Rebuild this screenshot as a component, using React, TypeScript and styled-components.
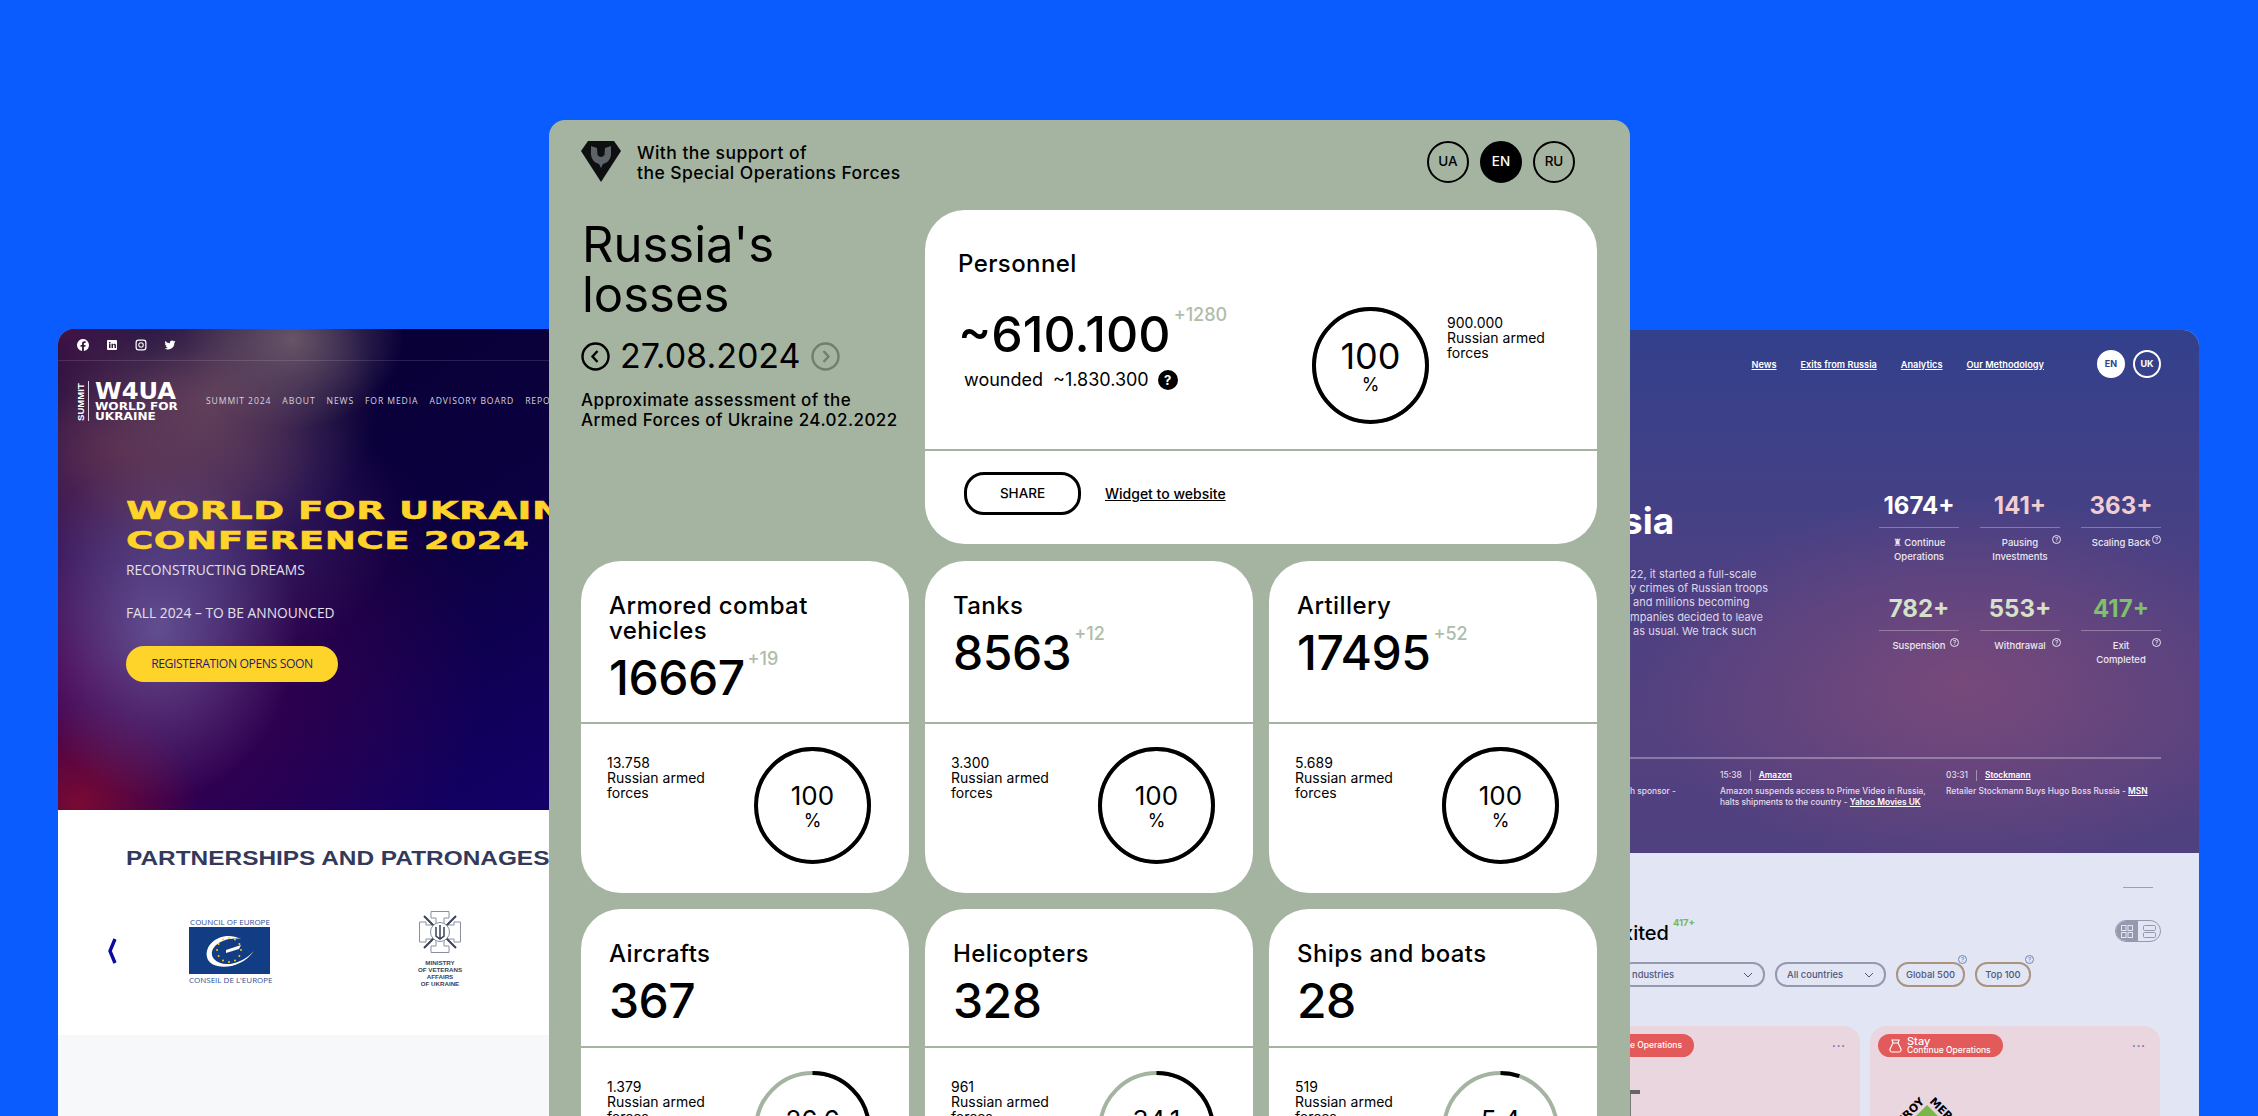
import type { ReactNode } from 'react'
import styled, { createGlobalStyle } from 'styled-components'

const GlobalStyle = createGlobalStyle`
  html, body { margin: 0; padding: 0; }
  body { background: #0a5cff; font-family: Inter, "Liberation Sans", sans-serif; }
  * { box-sizing: border-box; }
`

const GREEN = '#a5b4a0'

/* ---------- the desktop ---------- */

const Desktop = styled.div`
  position: relative;
  width: 2258px;
  height: 1116px;
  overflow: hidden;
  background: #0a5cff;
`

const LeftWindow = styled.section`
  position: absolute;
  left: 58px;
  top: 329px;
  width: 500px;
  height: 787px;
  border-radius: 16px 0 0 0;
  overflow: hidden;
  background: #f7f8fa;
  font-family: Inter, sans-serif;
`

const RightWindow = styled.section`
  position: absolute;
  left: 1630px;
  top: 330px;
  width: 569px;
  height: 786px;
  border-radius: 0 16px 0 0;
  overflow: hidden;
  background: #e2e6f4;
  font-family: Inter, sans-serif;
`

const Panel = styled.main`
  position: absolute;
  left: 549px;
  top: 120px;
  width: 1081px;
  height: 996px;
  border-radius: 16px 16px 0 0;
  background: ${GREEN};
  padding: 20px 32px 0;
  color: #000;
  overflow: hidden;
`

/* ---------- left window ---------- */

const Hero = styled.div`
  height: 481px;
  background:
    radial-gradient(110px 90px at 235px 10px, rgba(125, 105, 115, 0.75), transparent 100%),
    radial-gradient(170px 150px at 150px 70px, rgba(110, 75, 95, 0.8), transparent 100%),
    radial-gradient(200px 110px at 60px 120px, rgba(125, 60, 70, 0.5), transparent 100%),
    radial-gradient(140px 170px at 100px 300px, rgba(100, 85, 150, 0.9), transparent 100%),
    radial-gradient(120px 100px at 20px 475px, rgba(125, 10, 50, 0.95), transparent 100%),
    radial-gradient(220px 170px at 120px 190px, rgba(70, 60, 125, 0.7), transparent 100%),
    radial-gradient(100px 70px at 0px 0px, rgba(75, 20, 70, 0.9), transparent 100%),
    radial-gradient(400px 320px at 30px 340px, rgba(85, 0, 85, 0.9), transparent 100%),
    linear-gradient(150deg, #0a0038 30%, #0b0040 55%, #14006a 100%);
`

const SocialBar = styled.div`
  height: 32px;
  display: flex;
  align-items: center;
  gap: 17px;
  padding-left: 19px;
  border-bottom: 1px solid rgba(255, 255, 255, 0.12);
`

const SocialIcon = styled.svg`
  width: 12px;
  height: 12px;
  fill: #fff;
`

const NavRow = styled.div`
  display: flex;
  align-items: center;
  padding: 20px 0 0 19px;
  white-space: nowrap;
`

const Brand = styled.div`
  flex: none;
  display: flex;
  align-items: stretch;
  height: 40px;
  color: #fff;
  width: 129px;
`

const BrandSide = styled.span`
  writing-mode: vertical-rl;
  transform: rotate(180deg);
  font: 700 9.6px/8px "Liberation Sans", sans-serif;
  text-align: left;
  border-left: 1px solid rgba(255, 255, 255, 0.8);
  padding-left: 3px;
  margin-right: 6px;
`

const BrandText = styled.div`
  display: flex;
  flex-direction: column;
`

const BrandBig = styled.span`
  font: 900 23px/21px "DejaVu Sans", sans-serif;
  display: block;
  transform: scaleX(1.05);
  transform-origin: left;
`

const BrandSmall = styled.span`
  font: 700 11px/10px "DejaVu Sans", sans-serif;
  display: block;
  transform: scaleX(1.1);
  transform-origin: left;
`

const NavLinks = styled.nav`
  display: flex;
  gap: 11px;
  color: #d6d3df;
  font: 500 8.6px "Open Sans", sans-serif;
  letter-spacing: 0.9px;
`

const HeroBody = styled.div`
  padding: 75px 0 0 68px;
`

const HeroTitle = styled.h1`
  margin: 0;
  color: #ffd42a;
  font: 700 24px/30px "DejaVu Sans", sans-serif;
  letter-spacing: 0.35px;
  -webkit-text-stroke: 0.5px #ffd42a;
  white-space: nowrap;
  transform: scaleX(1.55);
  transform-origin: left;
`

const HeroNote = styled.p<{ $gap?: number }>`
  margin: ${p => p.$gap ?? 0}px 0 0;
  color: #e4e0ea;
  font: 400 13.8px/18px "Open Sans", sans-serif;
`

const HeroButton = styled.div`
  margin-top: 24px;
  width: 212px;
  height: 36px;
  border-radius: 18px;
  background: #ffd42a;
  color: #1c1a7a;
  font: 500 12.2px/36px "Open Sans", sans-serif;
  letter-spacing: -0.4px;
  text-align: center;
`

const Partners = styled.div`
  height: 225px;
  background: #fff;
  padding: 36px 0 0 68px;
`

const PartnersTitle = styled.h2`
  margin: 0;
  color: #33395a;
  font: 700 20px/24px "Liberation Sans", sans-serif;
  white-space: nowrap;
  transform: scaleX(1.22);
  transform-origin: left;
`

const PartnersRow = styled.div`
  display: flex;
  align-items: flex-start;
  margin: 47px 0 0 -19px;
`

const Chevron = styled.svg`
  width: 10px;
  height: 26px;
  margin-top: 21px;
  fill: none;
  stroke: #0a0aa0;
  stroke-width: 3.4;
`

const CoeLogo = styled.div`
  margin-left: 72px;
  width: 82px;
  color: #2b4f97;
  font: 400 8px/9px "Open Sans", sans-serif;
  text-align: center;
  white-space: nowrap;
`

const CoeFlag = styled.svg`
  display: block;
  width: 81px;
  height: 47px;
  margin: 1px 0;
`

const VeteransLogo = styled.div`
  margin: -6px 0 0 147px;
  width: 44px;
  display: flex;
  flex-direction: column;
  align-items: center;
  color: #3a4256;
  font: 700 6.2px/7px "Liberation Sans", sans-serif;
  text-align: center;
  white-space: nowrap;
`

const VeteransMark = styled.svg`
  width: 42px;
  height: 42px;
  margin-bottom: 6px;
`

/* ---------- centre panel ---------- */

const PanelHead = styled.header`
  display: flex;
  align-items: center;
  height: 43px;
`

const ForcesLogo = styled.svg`
  width: 40px;
  height: 41px;
  margin-right: 16px;
`

const ForcesText = styled.div`
  flex: 1;
  padding-top: 2px;
  font: 500 17.5px/20px Inter, sans-serif;
  letter-spacing: 0.45px;
`

const Langs = styled.div`
  display: flex;
  gap: 11px;
  margin-right: 23px;
`

const LangButton = styled.div<{ $active?: boolean }>`
  width: 42px;
  height: 42px;
  border-radius: 50%;
  border: 2.5px solid #000;
  background: ${p => (p.$active ? '#000' : 'transparent')};
  color: ${p => (p.$active ? '#fff' : '#000')};
  font: 500 13.5px/37px Inter, sans-serif;
  text-align: center;
`

const TopGrid = styled.div`
  display: grid;
  grid-template-columns: 344px 672px;
  margin-top: 27px;
`

const Intro = styled.div`
  padding-top: 10px;
`

const MainTitle = styled.h1`
  margin: 0 0 0 1px;
  font: 400 49px/50px Inter, sans-serif;
`

const DateRow = styled.div`
  display: flex;
  align-items: center;
  gap: 10px;
  margin-top: 18px;
  height: 36px;
  font: 400 34px/36px Inter, sans-serif;
`

const RoundArrow = styled.svg<{ $muted?: boolean }>`
  width: 29px;
  height: 29px;
  fill: none;
  stroke: #000;
  stroke-width: 2.4;
  opacity: ${p => (p.$muted ? 0.3 : 1)};
`

const IntroText = styled.p`
  margin: 16px 0 0;
  font: 500 17px/20px Inter, sans-serif;
  letter-spacing: 0.45px;
`

const Card = styled.article`
  background: #fff;
  border-radius: 40px;
  display: flex;
  flex-direction: column;
  overflow: hidden;
`

const CardTop = styled.div<{ $height: number; $wide?: boolean }>`
  height: ${p => p.$height}px;
  padding: ${p => (p.$wide ? '41px 33px 0' : '32px 28px 0')};
  border-bottom: 2px solid ${GREEN};
`

const CardTitle = styled.h2`
  margin: 0;
  font: 500 24px/25px Inter, sans-serif;
  letter-spacing: 0.4px;
`

const Count = styled.div`
  display: flex;
  align-items: flex-start;
  margin-top: 9px;
  font: 500 48px/52px Inter, sans-serif;
  letter-spacing: -0.5px;
`

const BigCount = styled(Count)`
  margin-top: 1px;
  font-size: 50px;
  letter-spacing: 0;
`

const Delta = styled.span`
  margin: -4px 0 0 3px;
  color: #aebdaa;
  font: 500 18px/22px Inter, sans-serif;
  letter-spacing: 0;
`

const CardBottom = styled.div`
  flex: 1;
  display: flex;
  justify-content: space-between;
  padding: 23px 38px 0 26px;
`

const Forces = styled.div`
  padding-top: 8px;
  font: 400 14px/15px Inter, sans-serif;
`

const Ring = styled.div`
  position: relative;
  width: 117px;
  height: 117px;
  flex: none;
  display: flex;
  flex-direction: column;
  align-items: center;
  justify-content: center;
`

const RingSvg = styled.svg`
  position: absolute;
  inset: 0;
  width: 100%;
  height: 100%;
  transform: rotate(-90deg);
`

const RingValue = styled.span`
  font: 400 26px/30px Inter, sans-serif;
`

const RingUnit = styled.span`
  font: 400 18px/20px Inter, sans-serif;
`

const HeroRingValue = styled(RingValue)`
  font-size: 36px;
  line-height: 38px;
`

const PersonnelBody = styled.div`
  display: flex;
  margin-top: 31px;
`

const PersonnelLeft = styled.div`
  width: 354px;
`

const Wounded = styled.div`
  display: flex;
  align-items: center;
  gap: 6px;
  margin: 9px 0 0 6px;
  font: 400 18px/22px Inter, sans-serif;
`

const WoundedValue = styled.span`
  margin-left: 4px;
`

const QuestionDot = styled.span`
  width: 20px;
  height: 20px;
  margin-left: 3px;
  border-radius: 50%;
  background: #000;
  color: #fff;
  font: 700 13px/20px Inter, sans-serif;
  text-align: center;
`

const PersonnelForces = styled(Forces)`
  padding: 8px 0 0 18px;
`

const ShareRow = styled.div`
  flex: 1;
  display: flex;
  align-items: center;
  gap: 24px;
  padding: 0 0 8px 39px;
`

const ShareButton = styled.div`
  width: 117px;
  height: 43px;
  border: 3px solid #000;
  border-radius: 20px;
  font: 500 13.5px/37px Inter, sans-serif;
  text-align: center;
`

const WidgetLink = styled.a`
  color: #000;
  text-decoration: underline;
  font: 500 14px Inter, sans-serif;
`

const CardGrid = styled.div`
  display: grid;
  grid-template-columns: repeat(3, 328px);
  gap: 16px;
  margin-top: 17px;
`

const Tall = styled(Card)`
  height: 332px;
`

const Personnel = styled(Card)`
  height: 334px;
`

/* ---------- right window ---------- */

const Losses = styled.div`
  height: 523px;
  color: #fff;
  background:
    radial-gradient(320px 190px at 334px 356px, rgba(124, 74, 122, 0.9), transparent 100%),
    linear-gradient(180deg, #33408c 0%, #4b4084 45%, #54417f 75%, #4f4080 100%);
  padding-top: 20px;
`

const TopNav = styled.div`
  display: flex;
  align-items: center;
  justify-content: flex-end;
  padding-right: 38px;
  height: 28px;
`

const TopLinks = styled.nav`
  display: flex;
  gap: 24px;
  margin-right: 53px;
  font: 600 9.2px Inter, sans-serif;
`

const TopLink = styled.a`
  color: #fff;
  text-decoration: underline;
`

const SmallLang = styled.div<{ $active?: boolean }>`
  width: 28px;
  height: 28px;
  margin-left: ${p => (p.$active ? 0 : 8)}px;
  border-radius: 50%;
  border: 2px solid #fff;
  background: ${p => (p.$active ? '#fff' : 'transparent')};
  color: ${p => (p.$active ? '#35408a' : '#fff')};
  font: 700 9px/24px Inter, sans-serif;
  text-align: center;
`

const LossesBody = styled.div`
  display: flex;
  justify-content: space-between;
  padding-right: 38px;
  height: 379px;
`

const Lead = styled.div`
  padding-top: 121px;
`

const LeadTitle = styled.h1`
  margin: 0 0 0 -8px;
  font: 700 37px/44px Inter, sans-serif;
`

const LeadText = styled.p`
  margin: 24px 0 0;
  color: #dcd8ea;
  font: 400 11px/14.2px Inter, sans-serif;
  white-space: pre;
`

const StatGrid = styled.div`
  display: grid;
  grid-template-columns: repeat(3, 80px);
  column-gap: 21px;
  grid-auto-rows: 103px;
  padding-top: 116px;
`

const Stat = styled.div`
  position: relative;
  text-align: center;
`

const StatValue = styled.div<{ $color: string }>`
  color: ${p => p.$color};
  height: 34px;
  border-bottom: 1px solid rgba(255, 255, 255, 0.3);
  font: 700 24px/24px Inter, sans-serif;
`

const StatLabel = styled.div`
  margin-top: 8px;
  color: #ebe8f0;
  font: 500 9.5px/13.7px Inter, sans-serif;
`

const HelpMark = styled.span<{ $color?: string; $top: number; $right: number }>`
  position: absolute;
  top: ${p => p.$top}px;
  right: ${p => p.$right}px;
  width: 9px;
  height: 9px;
  border-radius: 50%;
  border: 1px solid ${p => p.$color ?? '#ebe8f0'};
  color: ${p => p.$color ?? '#ebe8f0'};
  font: 500 6px/7px Inter, sans-serif;
  text-align: center;
`

const Ticker = styled.div`
  display: grid;
  grid-template-columns: 90px 226px 215px;
  margin-right: 38px;
  padding-top: 9px;
  border-top: 2px solid rgba(255, 255, 255, 0.3);
  color: #e2deec;
  font: 500 8.4px/11px Inter, sans-serif;
`

const TickerHead = styled.div`
  display: flex;
  align-items: center;
  height: 14px;
  margin-bottom: 4px;
`

const TickerDivider = styled.i`
  width: 1px;
  height: 11px;
  margin: 0 8px;
  background: rgba(255, 255, 255, 0.4);
`

const TickerLink = styled.a`
  color: #fff;
  font-weight: 600;
  text-decoration: underline;
`

const TickerBody = styled.div`
  white-space: nowrap;
`

const Companies = styled.div`
  padding: 34px 38px 0 0;
  color: #3b4169;
`

const Pager = styled.div`
  width: 30px;
  height: 1px;
  margin-left: auto;
  margin-right: 8px;
  background: #9aa0b5;
`

const ExitedRow = styled.div`
  display: flex;
  justify-content: space-between;
  align-items: flex-start;
  margin-top: 32px;
  height: 42px;
`

const Exited = styled.h2`
  margin: 0 0 0 -8px;
  display: flex;
  color: #000;
  font: 500 20px/26px Inter, sans-serif;
`

const ExitedCount = styled.span`
  margin: -4px 0 0 4px;
  color: #77b85e;
  font: 700 9.5px/14px Inter, sans-serif;
`

const ViewToggle = styled.div`
  width: 46px;
  height: 22px;
  border: 1.5px solid #9698ae;
  border-radius: 11px;
  overflow: hidden;
  display: flex;
`

const ViewHalf = styled.div<{ $active?: boolean }>`
  flex: 1;
  display: flex;
  align-items: center;
  justify-content: center;
  background: ${p => (p.$active ? '#9698ae' : 'transparent')};
`

const Filters = styled.div`
  display: flex;
  gap: 10px;
`

const Filter = styled.div<{ $width: number; $accent?: boolean; $flush?: boolean }>`
  position: relative;
  width: ${p => p.$width}px;
  height: 25px;
  padding: 0 ${p => (p.$accent ? 0 : 10)}px 0 ${p => (p.$flush ? 0 : p.$accent ? 0 : 10)}px;
  margin-left: ${p => (p.$flush ? '-10px' : 0)};
  display: flex;
  align-items: center;
  justify-content: ${p => (p.$accent ? 'center' : 'space-between')};
  border: 2px solid ${p => (p.$accent ? '#aa937f' : '#9698ae')};
  border-radius: 12px;
  color: #50557a;
  font: 500 9.4px Inter, sans-serif;
`

const FlushLabel = styled.span`
  padding-left: 10px;
`

const SelectCaret = styled.svg`
  width: 10px;
  height: 6px;
  fill: none;
  stroke: #50557a;
  stroke-width: 1;
`

const CompanyGrid = styled.div`
  display: grid;
  grid-template-columns: 230px 290px;
  gap: 10px;
  margin-top: 39px;
`

const CompanyCard = styled.div`
  position: relative;
  height: 120px;
  background: #ead6df;
  border-radius: 0 16px 0 0;
  overflow: hidden;
`

const RoundCompanyCard = styled(CompanyCard)`
  border-radius: 16px 16px 0 0;
`

const Badge = styled.div`
  display: inline-flex;
  align-items: center;
  gap: 5px;
  margin: 8px 0 0 8px;
  height: 23px;
  padding: 0 12px 0 11px;
  border-radius: 12px;
  background: #e25a5a;
  color: #fff;
`

const ClippedBadge = styled(Badge)`
  margin-left: 0;
  padding-left: 0;
  border-radius: 0 12px 12px 0;
  width: 64px;
  justify-content: flex-end;
`

const BadgeLines = styled.div`
  display: flex;
  flex-direction: column;
  font: 500 11px/10px Inter, sans-serif;
`

const BadgeSub = styled.span`
  font: 500 8.5px/9px Inter, sans-serif;
  white-space: nowrap;
`

const MoreDots = styled.span`
  position: absolute;
  top: 12px;
  right: 14px;
  color: #6b6a9a;
  font: 700 11px/11px Inter, sans-serif;
  letter-spacing: 1px;
`

const LeroyLogo = styled.svg`
  position: absolute;
  left: 0;
  top: 60px;
  width: 120px;
  height: 60px;
`

const TickLogo = styled.div`
  position: absolute;
  left: 0;
  top: 64px;
  width: 10px;
  height: 4px;
  background: #666;

  &::after {
    content: '';
    position: absolute;
    left: 0;
    top: 4px;
    width: 1px;
    height: 30px;
    background: #777;
  }
`

const RingGauge = ({ value, children }: { value: number; children: ReactNode }) => {
  const r = 56.5
  const c = 2 * Math.PI * r
  return (
    <Ring>
      <RingSvg viewBox="0 0 117 117">
        <circle cx="58.5" cy="58.5" r={r} fill="none" stroke={GREEN} strokeWidth="4" />
        <circle cx="58.5" cy="58.5" r={r} fill="none" stroke="#000" strokeWidth="4"
          strokeDasharray={`${(c * value) / 100} ${c}`} />
      </RingSvg>
      {children}
    </Ring>
  )
}

const stats1 = [
  { name: 'Armored combat vehicles', count: '16667', delta: '+19', total: '13.758', pct: 100, label: '100' },
  { name: 'Tanks', count: '8563', delta: '+12', total: '3.300', pct: 100, label: '100' },
  { name: 'Artillery', count: '17495', delta: '+52', total: '5.689', pct: 100, label: '100' },
]

const stats2 = [
  { name: 'Aircrafts', count: '367', total: '1.379', pct: 26.6, label: '26.6' },
  { name: 'Helicopters', count: '328', total: '961', pct: 34.1, label: '34.1' },
  { name: 'Ships and boats', count: '28', total: '519', pct: 5.4, label: '5.4' },
]

const HelpIcon = ({ top, right, color }: { top: number; right: number; color?: string }) => (
  <HelpMark $top={top} $right={right} $color={color}>?</HelpMark>
)

const App = () => {
  return (
    <Desktop>
      <GlobalStyle />

      <LeftWindow>
        <Hero>
          <SocialBar>
            <SocialIcon viewBox="0 0 24 24"><path d="M24 12a12 12 0 1 0-13.900 11.900v-8.400H7.100V12h3V9.400c0-3 1.800-4.700 4.500-4.700 1.300 0 2.700.2 2.700.2v3h-1.500c-1.500 0-2 .9-2 1.900V12h3.400l-.5 3.500h-2.900v8.400A12 12 0 0 0 24 12z" /></SocialIcon>
            <SocialIcon viewBox="0 0 24 24"><path fillRule="evenodd" d="M4 2h16a2 2 0 0 1 2 2v16a2 2 0 0 1-2 2H4a2 2 0 0 1-2-2V4a2 2 0 0 1 2-2zm2 7.500V18h3V9.500H6zM7.500 5.500a1.700 1.700 0 1 0 0 3.400 1.700 1.700 0 0 0 0-3.400zM11 9.500V18h3v-4.500c0-2.500 3-2.600 3 0V18h3v-5.300c0-4-4.300-3.900-6-1.900V9.500h-3z" /></SocialIcon>
            <SocialIcon viewBox="0 0 24 24"><path fillRule="evenodd" d="M7 1h10a6 6 0 0 1 6 6v10a6 6 0 0 1-6 6H7a6 6 0 0 1-6-6V7a6 6 0 0 1 6-6zm0 2.500A3.500 3.500 0 0 0 3.500 7v10A3.500 3.500 0 0 0 7 20.500h10a3.500 3.500 0 0 0 3.500-3.500V7A3.500 3.500 0 0 0 17 3.500H7zM12 6.500a5.500 5.500 0 1 1 0 11 5.500 5.500 0 0 1 0-11zm0 2a3.500 3.500 0 1 0 0 7 3.500 3.500 0 0 0 0-7z" /></SocialIcon>
            <SocialIcon viewBox="0 0 24 24"><path d="M23 5.100c-.8.400-1.700.600-2.600.700a4.500 4.500 0 0 0 2-2.500c-.9.500-1.900.900-2.900 1.100a4.500 4.500 0 0 0-7.700 4.100A12.800 12.800 0 0 1 2.500 3.800a4.500 4.500 0 0 0 1.400 6c-.7 0-1.400-.2-2-.6 0 2.200 1.500 4.100 3.600 4.500-.7.200-1.400.2-2 .1a4.500 4.500 0 0 0 4.200 3.100A9 9 0 0 1 1 18.800 12.800 12.800 0 0 0 20.700 7.400c.9-.6 1.700-1.400 2.300-2.300z" /></SocialIcon>
          </SocialBar>
          <NavRow>
            <Brand>
              <BrandSide>SUMMIT</BrandSide>
              <BrandText>
                <BrandBig>W4UA</BrandBig>
                <BrandSmall>WORLD FOR</BrandSmall>
                <BrandSmall>UKRAINE</BrandSmall>
              </BrandText>
            </Brand>
            <NavLinks>
              <span>SUMMIT 2024</span>
              <span>ABOUT</span>
              <span>NEWS</span>
              <span>FOR MEDIA</span>
              <span>ADVISORY BOARD</span>
              <span>REPORTS</span>
            </NavLinks>
          </NavRow>
          <HeroBody>
            <HeroTitle>WORLD FOR UKRAINE<br />CONFERENCE 2024</HeroTitle>
            <HeroNote $gap={5}>RECONSTRUCTING DREAMS</HeroNote>
            <HeroNote $gap={25}>FALL 2024 – TO BE ANNOUNCED</HeroNote>
            <HeroButton>REGISTERATION OPENS SOON</HeroButton>
          </HeroBody>
        </Hero>
        <Partners>
          <PartnersTitle>PARTNERSHIPS AND PATRONAGES</PartnersTitle>
          <PartnersRow>
            <Chevron viewBox="0 0 10 26"><path d="M8 1 L3 13 L8 25" /></Chevron>
            <CoeLogo>
              COUNCIL OF EUROPE
              <CoeFlag viewBox="0 0 81 47">
                <rect width="81" height="47" fill="#123c84" />
                <path d="M52 12C34 3 15 16 18 30c2 13 32 15 47-6C52 38 33 41 25 32 17 22 33 9 52 12z" fill="#fff" />
                <path d="M37 23 L52 18 L50 22 L37 26z" fill="#fff" />
                {[0, 30, 60, 90, 120, 150, 180, 210, 240, 270, 300, 330].map(a => (
                  <circle key={a} cx={40 + 12 * Math.cos((a * Math.PI) / 180)} cy={23 + 12 * Math.sin((a * Math.PI) / 180)} r="1" fill="#ffcc00" />
                ))}
              </CoeFlag>
              CONSEIL DE L'EUROPE
            </CoeLogo>
            <VeteransLogo>
              <VeteransMark viewBox="0 0 42 42">
                <path d="M12 .5H30V7H25V14H35V11H41.500V31H35V28H25V35H30V41.500H12V35H17V28H7V31H.5V11H7V14H17V7H12Z" fill="#fff" stroke="#8a90a0" strokeWidth="1" />
                <path d="M5 5l32 32M37 5L5 37" stroke="#3a4256" strokeWidth="2" />
                <circle cx="21" cy="21" r="9.500" fill="#fff" stroke="#8a90a0" />
                <path d="M21 14v14M17 16v9l4 3 4-3v-9" fill="none" stroke="#3a4256" strokeWidth="1.500" />
              </VeteransMark>
              MINISTRY<br />OF VETERANS<br />AFFAIRS<br />OF UKRAINE
            </VeteransLogo>
          </PartnersRow>
        </Partners>
      </LeftWindow>

      <RightWindow>
        <Losses>
          <TopNav>
            <TopLinks>
              <TopLink>News</TopLink>
              <TopLink>Exits from Russia</TopLink>
              <TopLink>Analytics</TopLink>
              <TopLink>Our Methodology</TopLink>
            </TopLinks>
            <SmallLang $active>EN</SmallLang>
            <SmallLang>UK</SmallLang>
          </TopNav>
          <LossesBody>
            <Lead>
              <LeadTitle>sia</LeadTitle>
              <LeadText>{`22, it started a full-scale
y crimes of Russian troops
 and millions becoming
mpanies decided to leave
 as usual. We track such`}</LeadText>
            </Lead>
            <StatGrid>
              <Stat><StatValue $color="#ffffff">1674+</StatValue><StatLabel>♜ Continue<br />Operations</StatLabel></Stat>
              <Stat><StatValue $color="#f0cdd0">141+</StatValue><StatLabel>Pausing<br />Investments</StatLabel><HelpIcon top={41} right={-1} /></Stat>
              <Stat><StatValue $color="#f0cdd0">363+</StatValue><StatLabel>Scaling Back</StatLabel><HelpIcon top={41} right={0} /></Stat>
              <Stat><StatValue $color="#d3e2c8">782+</StatValue><StatLabel>Suspension</StatLabel><HelpIcon top={41} right={0} /></Stat>
              <Stat><StatValue $color="#d3e2c8">553+</StatValue><StatLabel>Withdrawal</StatLabel><HelpIcon top={41} right={-1} /></Stat>
              <Stat><StatValue $color="#7fc06a">417+</StatValue><StatLabel>Exit<br />Completed</StatLabel><HelpIcon top={41} right={0} /></Stat>
            </StatGrid>
          </LossesBody>
          <Ticker>
            <div>
              <TickerHead />
              <TickerBody>h sponsor -</TickerBody>
            </div>
            <div>
              <TickerHead>15:38<TickerDivider /><TickerLink>Amazon</TickerLink></TickerHead>
              <TickerBody>Amazon suspends access to Prime Video in Russia,<br />halts shipments to the country - <TickerLink>Yahoo Movies UK</TickerLink></TickerBody>
            </div>
            <div>
              <TickerHead>03:31<TickerDivider /><TickerLink>Stockmann</TickerLink></TickerHead>
              <TickerBody>Retailer Stockmann Buys Hugo Boss Russia - <TickerLink>MSN</TickerLink></TickerBody>
            </div>
          </Ticker>
        </Losses>
        <Companies>
          <Pager />
          <ExitedRow>
            <Exited>xited<ExitedCount>417+</ExitedCount></Exited>
            <ViewToggle>
              <ViewHalf $active>
                <svg width="12" height="13" viewBox="0 0 12 13" fill="none" stroke="#e2e6f4"><rect x=".5" y=".5" width="4.500" height="5" /><rect x="7" y=".5" width="4.500" height="5" /><rect x=".5" y="7.500" width="4.500" height="5" /><rect x="7" y="7.500" width="4.500" height="5" /></svg>
              </ViewHalf>
              <ViewHalf>
                <svg width="13" height="13" viewBox="0 0 13 13" fill="none" stroke="#9698ae"><rect x=".5" y=".5" width="12" height="5" rx="1" /><rect x=".5" y="7.500" width="12" height="5" rx="1" /></svg>
              </ViewHalf>
            </ViewToggle>
          </ExitedRow>
          <Filters>
            <Filter $width={145} $flush>
              <FlushLabel>ndustries</FlushLabel>
              <SelectCaret viewBox="0 0 10 6"><path d="M1 1l4 4 4-4" /></SelectCaret>
            </Filter>
            <Filter $width={111}>
              All countries
              <SelectCaret viewBox="0 0 10 6"><path d="M1 1l4 4 4-4" /></SelectCaret>
            </Filter>
            <Filter $width={69} $accent>Global 500<HelpIcon top={-9} right={-4} color="#6f86b8" /></Filter>
            <Filter $width={56} $accent>Top 100<HelpIcon top={-9} right={-5} color="#6f86b8" /></Filter>
          </Filters>
          <CompanyGrid>
            <CompanyCard>
              <ClippedBadge>
                <BadgeSub>ue Operations</BadgeSub>
              </ClippedBadge>
              <MoreDots>...</MoreDots>
              <TickLogo />
            </CompanyCard>
            <RoundCompanyCard>
              <Badge>
                <svg width="13" height="14" viewBox="0 0 13 14" fill="none" stroke="#fff" strokeWidth="1.100"><path d="M4 4h5l3 6c.5 2-1 3-2 3H3c-1 0-2.500-1-2-3zM4 4 3 1h7L9 4" /></svg>
                <BadgeLines>Stay<BadgeSub>Continue Operations</BadgeSub></BadgeLines>
              </Badge>
              <MoreDots>...</MoreDots>
              <LeroyLogo viewBox="0 0 120 60">
                <path d="M57 19 L97 59 L57 99 L17 59z" fill="#7ab648" />
                <text x="59" y="16" transform="rotate(45 59 16)" fontFamily="DejaVu Sans" fontWeight="700" fontSize="11">MERLIN</text>
                <text x="55" y="16" transform="rotate(-45 55 16)" fontFamily="DejaVu Sans" fontWeight="700" fontSize="11" textAnchor="end">LEROY</text>
              </LeroyLogo>
            </RoundCompanyCard>
          </CompanyGrid>
        </Companies>
      </RightWindow>

      <Panel>
        <PanelHead>
          <ForcesLogo viewBox="0 0 40 41">
            <path d="M7 0H33L40 10 20 41 0 10z" fill="#0d0f10" />
            <path d="M10 5 L16 7 L16.500 14 Q20 18 23.500 14 L24 7 L30 5 L30 14 Q29 21 22 23 L20 27 L18 23 Q11 21 10 14z" fill="#5d6366" />
          </ForcesLogo>
          <ForcesText>With the support of<br />the Special Operations Forces</ForcesText>
          <Langs>
            <LangButton>UA</LangButton>
            <LangButton $active>EN</LangButton>
            <LangButton>RU</LangButton>
          </Langs>
        </PanelHead>

        <TopGrid>
          <Intro>
            <MainTitle>Russia's<br />losses</MainTitle>
            <DateRow>
              <RoundArrow viewBox="0 0 29 29"><circle cx="14.500" cy="14.500" r="13" /><path d="M16.500 9l-5 5.500 5 5.500" /></RoundArrow>
              27.08.2024
              <RoundArrow $muted viewBox="0 0 29 29"><circle cx="14.500" cy="14.500" r="13" /><path d="M12.500 9l5 5.500-5 5.500" /></RoundArrow>
            </DateRow>
            <IntroText>Approximate assessment of the<br />Armed Forces of Ukraine 24.02.2022</IntroText>
          </Intro>
          <Personnel>
            <CardTop $height={241} $wide>
              <CardTitle>Personnel</CardTitle>
              <PersonnelBody>
                <PersonnelLeft>
                  <BigCount>~610.100<Delta>+1280</Delta></BigCount>
                  <Wounded>wounded <WoundedValue>~1.830.300</WoundedValue><QuestionDot>?</QuestionDot></Wounded>
                </PersonnelLeft>
                <RingGauge value={100}>
                  <HeroRingValue>100</HeroRingValue>
                  <RingUnit>%</RingUnit>
                </RingGauge>
                <PersonnelForces>900.000<br />Russian armed<br />forces</PersonnelForces>
              </PersonnelBody>
            </CardTop>
            <ShareRow>
              <ShareButton>SHARE</ShareButton>
              <WidgetLink>Widget to website</WidgetLink>
            </ShareRow>
          </Personnel>
        </TopGrid>

        <CardGrid>
          {stats1.map(s => (
            <Tall key={s.name}>
              <CardTop $height={163}>
                <CardTitle>{s.name}</CardTitle>
                <Count>{s.count}<Delta>{s.delta}</Delta></Count>
              </CardTop>
              <CardBottom>
                <Forces>{s.total}<br />Russian armed<br />forces</Forces>
                <RingGauge value={s.pct}>
                  <RingValue>{s.label}</RingValue>
                  <RingUnit>%</RingUnit>
                </RingGauge>
              </CardBottom>
            </Tall>
          ))}
          {stats2.map(s => (
            <Tall key={s.name}>
              <CardTop $height={139}>
                <CardTitle>{s.name}</CardTitle>
                <Count>{s.count}</Count>
              </CardTop>
              <CardBottom>
                <Forces>{s.total}<br />Russian armed<br />forces</Forces>
                <RingGauge value={s.pct}>
                  <RingValue>{s.label}</RingValue>
                  <RingUnit>%</RingUnit>
                </RingGauge>
              </CardBottom>
            </Tall>
          ))}
        </CardGrid>
      </Panel>
    </Desktop>
  )
}

export default App
